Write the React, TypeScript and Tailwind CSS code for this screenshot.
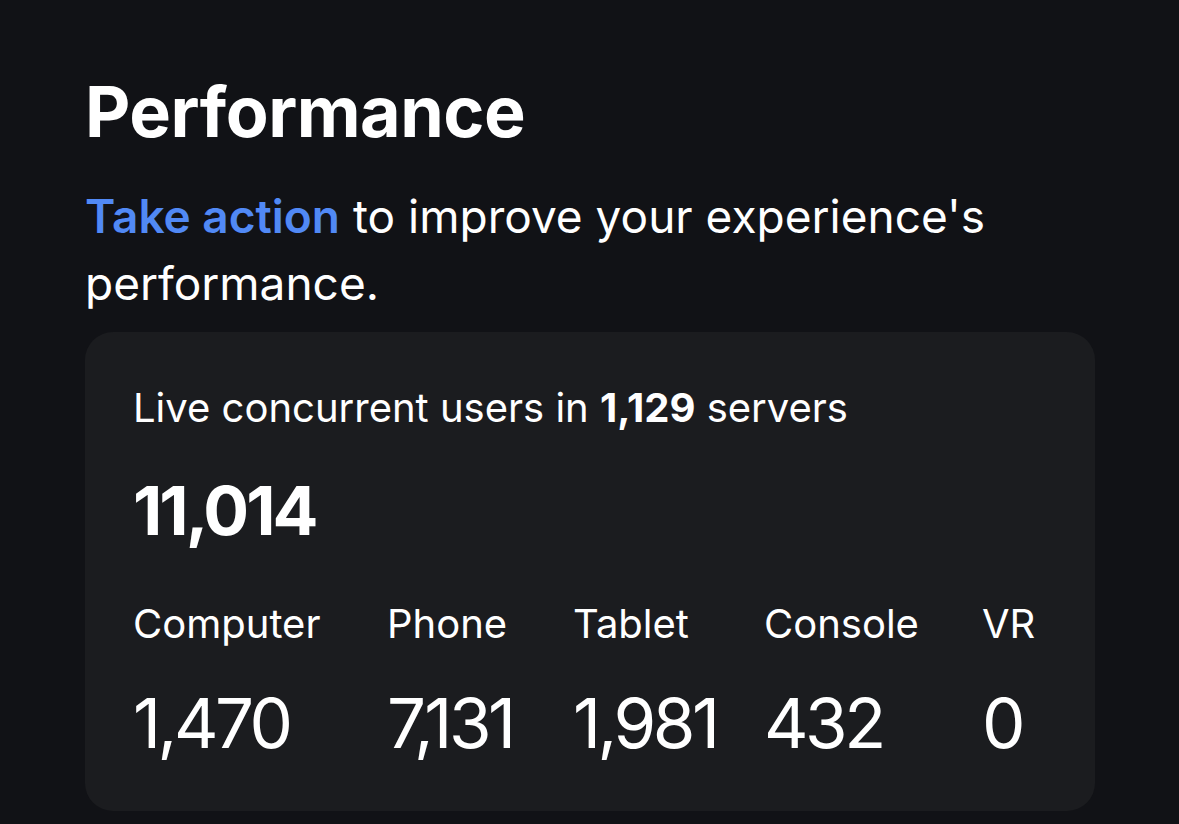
const stats = [
  { label: "Computer", value: "1,470", width: "w-[254px]" },
  { label: "Phone", value: "7,131", width: "w-[186px]" },
  { label: "Tablet", value: "1,981", width: "w-[191px]" },
  { label: "Console", value: "432", width: "w-[218px]" },
  { label: "VR", value: "0", width: "w-auto" },
];

const App = () => {
  return (
    <div
      className="min-h-screen w-full bg-[#111216] text-white"
      style={{ fontFamily: "Inter, 'Noto Sans', sans-serif" }}
    >
      <div className="pl-[85px] pr-[84px] pt-[70px]">
        <h1 className="text-[70px] font-bold leading-[84px] tracking-[-0.5px]">
          Performance
        </h1>
        <p className="mt-[29px] text-[46px] leading-[67px] w-[960px]">
          <span className="font-semibold text-[#5189f5]">Take action</span> to
          improve your experience's performance.
        </p>
        <div className="mt-[15px] h-[479px] w-[1010px] rounded-[28px] bg-[#1b1c1f] px-[48px] pt-[48px]">
          <p className="text-[40px] leading-[56px]">
            Live concurrent users in <span className="font-bold">1,129</span>{" "}
            servers
          </p>
          <p className="mt-[34px] text-[68px] font-bold leading-[80px] tracking-[-3px]">
            11,014
          </p>
          <div className="mt-[46px] flex">
            {stats.map((s) => (
              <div key={s.label} className={`flex flex-col ${s.width}`}>
                <span className="text-[40px] leading-[56px]">{s.label}</span>
                <span className="mt-[31px] text-[69px] leading-[80px] tracking-[-3.5px]">
                  {s.value}
                </span>
              </div>
            ))}
          </div>
        </div>
      </div>
    </div>
  );
};

export default App;
